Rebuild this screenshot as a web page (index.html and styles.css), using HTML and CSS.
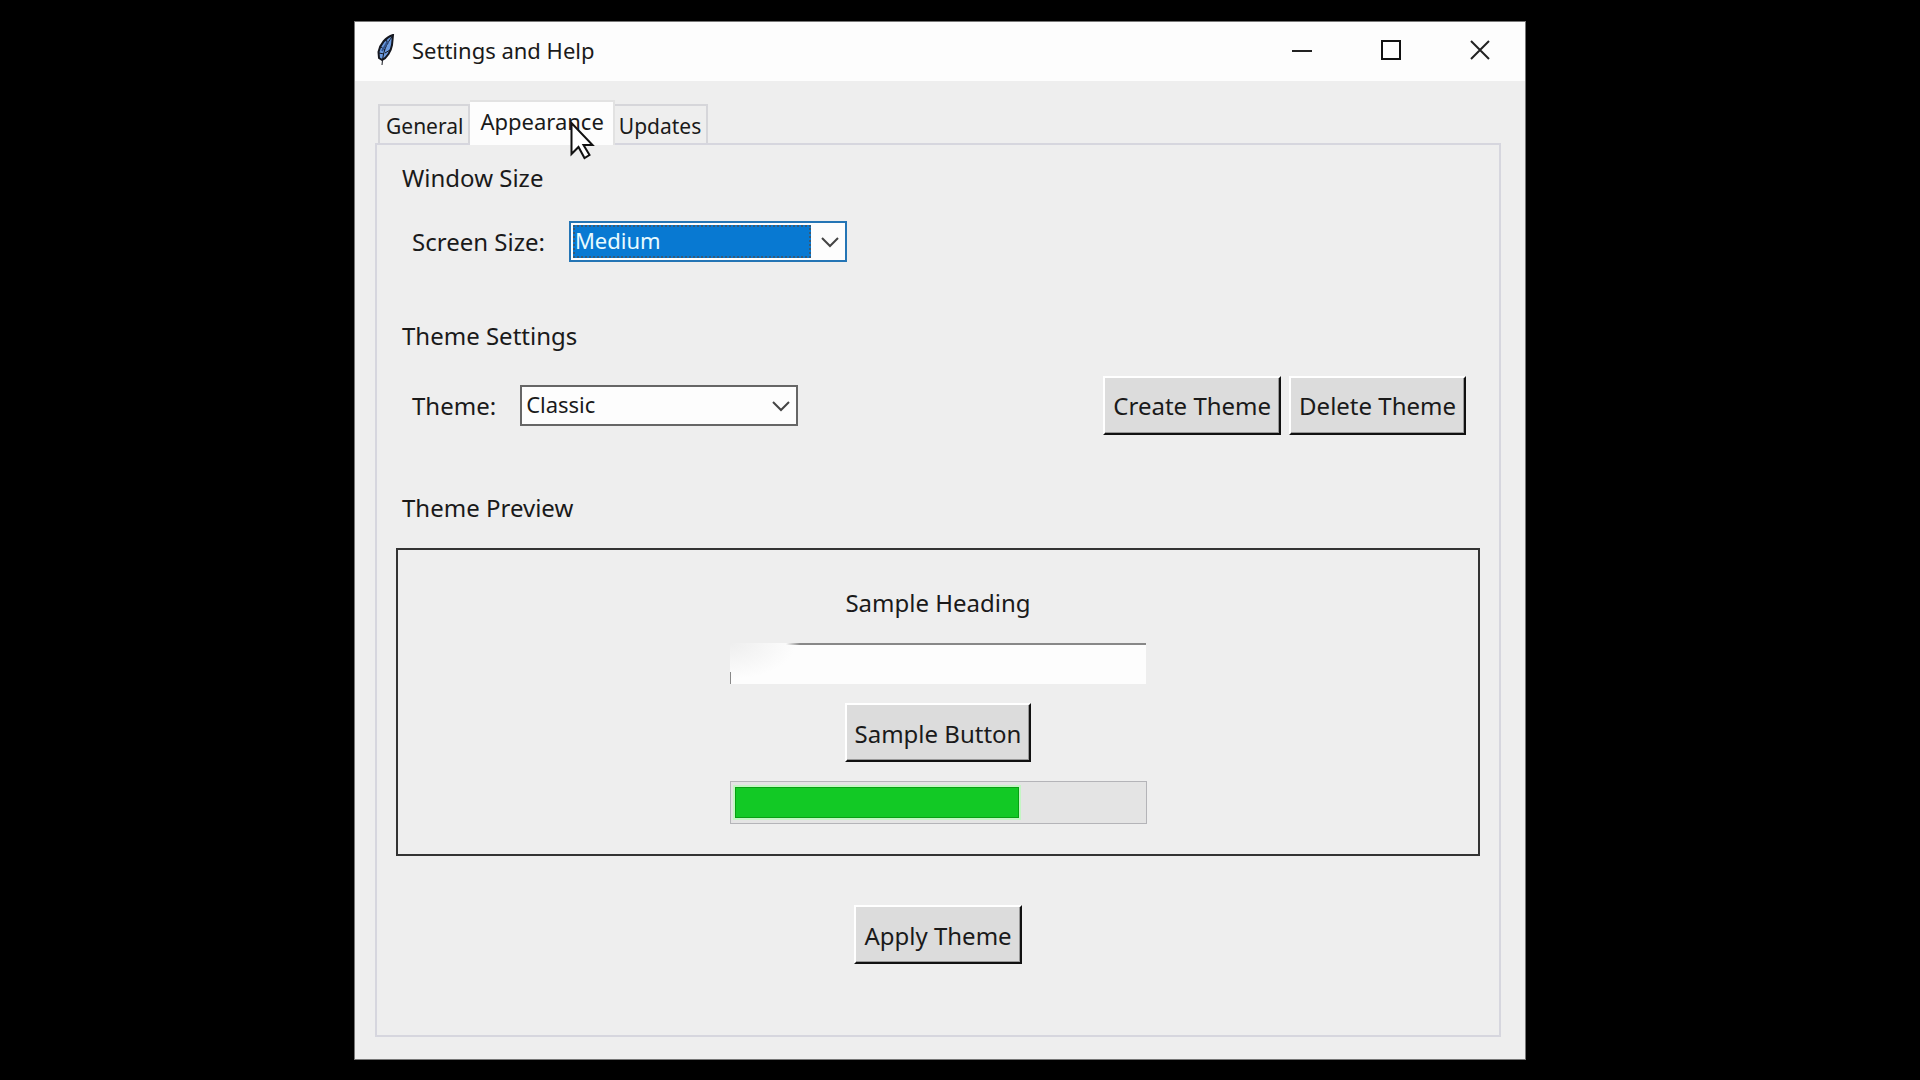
FILE: index.html
```html
<!DOCTYPE html>
<html lang="en">
<head>
<meta charset="utf-8">
<title>Settings and Help</title>
<link rel="stylesheet" href="styles.css">
</head>
<body>
<main class="window">
  <header class="titlebar">
    <svg class="app-icon" width="18" height="32" viewBox="0 0 18 32" aria-hidden="true">
      <path d="M16 1C9 3 3 10 1.500 18L2 24l3 2c5-2 9-9 10-15z" fill="#6c9be0" stroke="#15171f" stroke-width="2"/>
      <path d="M15 3C9 10 6 18 5 31M4 13l4 3M2 19l5 1M9 6l2 4M8 19l5-3" fill="none" stroke="#15171f" stroke-width="1"/>
      <path d="M11 7L5 17" stroke="#31548f" stroke-width="2"/>
    </svg>
    <h1 class="title">Settings and Help</h1>
    <div class="caption-buttons">
      <button class="caption" aria-label="Minimize"><svg width="20" height="20" viewBox="0 0 20 20"><path d="M0 11h20" stroke="#222" stroke-width="2"/></svg></button>
      <button class="caption" aria-label="Maximize"><svg width="20" height="20" viewBox="0 0 20 20"><path d="M1 1h18v18H1z" fill="none" stroke="#111" stroke-width="2"/></svg></button>
      <button class="caption" aria-label="Close"><svg width="20" height="20" viewBox="0 0 20 20"><path d="M1 1l18 18M19 1L1 19" stroke="#222" stroke-width="2"/></svg></button>
    </div>
  </header>
  <div class="client">
    <div class="tabs" role="tablist">
      <button class="tab" role="tab">General</button>
      <button class="tab tab-active" role="tab" aria-selected="true">Appearance
        <svg class="pointer" width="25" height="39" viewBox="0 0 25 39" aria-hidden="true"><path d="M1.500 2v31l7-7 6 11 5-3-6-10h9z" fill="#fff" stroke="#111" stroke-width="2"/></svg>
      </button>
      <button class="tab" role="tab">Updates</button>
    </div>
    <div class="panel" role="tabpanel">
      <section class="group">
        <h2 class="heading">Window Size</h2>
        <div class="row">
          <label for="screen-size">Screen Size:</label>
          <div class="combo combo-focus">
            <select id="screen-size"><option>Medium</option></select>
            <svg class="chevron" width="18" height="12" viewBox="0 0 18 12" aria-hidden="true"><path d="M1 2l8 8 8-8" fill="none" stroke="#444" stroke-width="2"/></svg>
          </div>
        </div>
      </section>
      <section class="group group-theme">
        <h2 class="heading">Theme Settings</h2>
        <div class="row">
          <label for="theme">Theme:</label>
          <div class="combo">
            <select id="theme"><option>Classic</option></select>
            <svg class="chevron" width="18" height="12" viewBox="0 0 18 12" aria-hidden="true"><path d="M1 2l8 8 8-8" fill="none" stroke="#444" stroke-width="2"/></svg>
          </div>
          <div class="actions">
            <button class="btn">Create Theme</button>
            <button class="btn">Delete Theme</button>
          </div>
        </div>
      </section>
      <section class="group">
        <h2 class="heading">Theme Preview</h2>
        <div class="preview">
          <h3 class="sample-heading">Sample Heading</h3>
          <input class="entry" type="text" aria-label="Sample entry">
          <button class="btn">Sample Button</button>
          <progress class="progress" value="70" max="100" aria-label="Sample progress"></progress>
        </div>
      </section>
      <button class="btn apply">Apply Theme</button>
    </div>
  </div>
</main>
</body>
</html>
```
FILE: styles.css
```css
* { box-sizing: border-box; }

body {
  margin: 0;
  min-height: 100vh;
  padding: 21px 394px 20px 354px;
  display: flex;
  background: #000;
  color: #1a1a1a;
  font-family: "Noto Sans", "Open Sans", sans-serif;
  font-size: 24px;
  line-height: 32px;
}

button, select, input { font: inherit; color: inherit; }

h1, h2, h3 { margin: 0; font-size: inherit; font-weight: 400; }

.window {
  flex: 1;
  display: flex;
  flex-direction: column;
  border: 1px solid #777;
  background: #eee;
}

.titlebar {
  height: 59px;
  padding: 0 1px 4px 22px;
  display: flex;
  align-items: center;
  gap: 17px;
  background: #fdfdfd;
}

.title { font-size: 22px; }

.caption-buttons { margin-left: auto; display: flex; }

.caption {
  width: 89px;
  height: 54px;
  padding: 0;
  border: 0;
  background: none;
  display: grid;
  place-items: center;
}

.client {
  flex: 1;
  padding: 19px 24px 22px 20px;
  display: flex;
  flex-direction: column;
}

.tabs {
  padding-left: 3px;
  display: flex;
  align-items: flex-end;
}

.tab {
  height: 39px;
  padding: 2px 5px 0 6px;
  border: 2px solid #d6d6da;
  border-bottom: 0;
  background: #eee;
  font-size: 21px;
}

.tab + .tab { padding-left: 4px; border-left: 0; }

.tab + .tab-active {
  position: relative;
  height: 45px;
  margin-bottom: -2px;
  padding: 0 9px 5px 10px;
  border-color: #e2e2e2;
  background: #fdfdfd;
  font-size: 22px;
}

.pointer { position: absolute; left: 100px; top: 19px; }

.panel {
  flex: 1;
  padding: 17px 19px;
  border: 2px solid #d6d6de;
  display: flex;
  flex-direction: column;
}

.group { margin-bottom: 49px; }

.heading { padding-left: 6px; }

.row {
  height: 60px;
  margin-top: 17px;
  padding: 0 14px 0 16px;
  display: flex;
  align-items: center;
  gap: 24px;
}

.row label { padding-top: 2px; }

.group-theme { margin-bottom: 57px; }

.group-theme .row { margin-top: 23px; }

.combo {
  position: relative;
  width: 278px;
  height: 41px;
  border: 2px solid #666;
  background: #fdfdfd;
  font-size: 22px;
}

.combo select {
  position: relative;
  width: 100%;
  height: 100%;
  padding: 0 36px 2px 4px;
  border: 0;
  background: none;
  appearance: none;
  outline: 0;
}

.chevron { position: absolute; right: 6px; top: 13px; pointer-events: none; }

.combo-focus { border-color: #2475b5; color: #e8fbff; }

.combo-focus::before {
  content: "";
  position: absolute;
  inset: 2px 34px 2px 2px;
  border: 2px dotted #355a78;
  background: #0879d2;
}

.actions { margin-left: auto; display: flex; gap: 8px; }

.btn {
  height: 59px;
  padding: 2px 8px 0;
  border: 2px solid;
  border-color: #fff #111 #111 #fff;
  box-shadow: inset -1px -1px #999;
  background: #dcdcdc;
}

.preview {
  height: 308px;
  margin-top: 24px;
  padding-top: 37px;
  border: 2px solid #333;
  display: flex;
  flex-direction: column;
  align-items: center;
}

.entry {
  width: 416px;
  height: 41px;
  margin: 24px 0 19px;
  padding: 0 6px;
  border: 0;
  background:
    linear-gradient(90deg, transparent 56px, #888 70px) top / 100% 2px no-repeat,
    linear-gradient(#888, #888) left bottom / 1px 12px no-repeat,
    radial-gradient(ellipse 66px 36px at 0 0, #eee, #fdfdfd);
}

.progress {
  width: 417px;
  height: 43px;
  margin-top: 19px;
  padding: 5px 4px;
  border: 1px solid #b4b4b8;
  background: #e4e4e4;
  appearance: none;
}

.progress::-webkit-progress-bar { background: none; }

.progress::-webkit-progress-value {
  border: 1px solid #07a012;
  background: #12c925;
  box-shadow: 0 0 0 2px #c4f5c4;
}

.apply { align-self: center; }
```
